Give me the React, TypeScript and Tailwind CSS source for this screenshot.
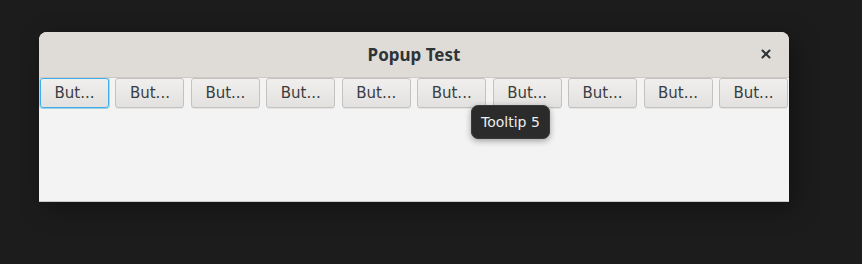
import { X } from "lucide-react";

const labels = Array.from({ length: 10 }, (_, i) => `Button ${i + 1}`);

function PopupButton({ focused }: { focused?: boolean }) {
  return (
    <button
      className={
        "w-[69px] h-[30px] rounded-[3px] border text-[15px] text-[#3a3d3f] bg-gradient-to-b from-[#f0efee] to-[#e2e1df] shadow-[0_1px_0_rgba(0,0,0,0.06)] " +
        (focused ? "border-[#3daee9] ring-1 ring-[#3daee9]/40" : "border-[#c4c2bf]")
      }
      style={{ fontFamily: '"DejaVu Sans", sans-serif' }}
    >
      But...
    </button>
  );
}

export default function App() {
  return (
    <div className="w-[862px] h-[264px] bg-[#1c1c1c] pt-[32px] pl-[39px]">
      <div className="relative w-[750px] h-[170px] bg-[#f3f3f3] rounded-t-[8px] shadow-[6px_6px_24px_rgba(0,0,0,0.35)] border-b border-[#c9c9c9] flex flex-col">
        {/* Title bar */}
        <div className="h-[46px] shrink-0 rounded-t-[8px] bg-[#dfdcd8] border-b border-[#cdcac6] flex items-center justify-center relative">
          <span
            className="text-[17px] font-bold text-[#2e3436]"
            style={{ fontFamily: '"Noto Sans", sans-serif' }}
          >
            Popup Test
          </span>
          <X className="absolute right-[16px] top-[15px] w-[14px] h-[14px] text-[#2e3436]" strokeWidth={3.5} />
        </div>

        {/* Buttons */}
        <div className="flex justify-between px-[1px]">
          {labels.map((l, i) => (
            <PopupButton key={l} focused={i === 0} />
          ))}
        </div>

        {/* Tooltip */}
        <div
          className="absolute left-[432px] top-[73px] h-[34px] px-[9px] rounded-[7px] bg-[#2b2b2b] border border-[#3a3a3a] text-[#eeeeec] text-[14px] flex items-center shadow-[0_2px_6px_rgba(0,0,0,0.35)]"
          style={{ fontFamily: '"DejaVu Sans", sans-serif' }}
        >
          Tooltip 5
        </div>
      </div>
    </div>
  );
}
